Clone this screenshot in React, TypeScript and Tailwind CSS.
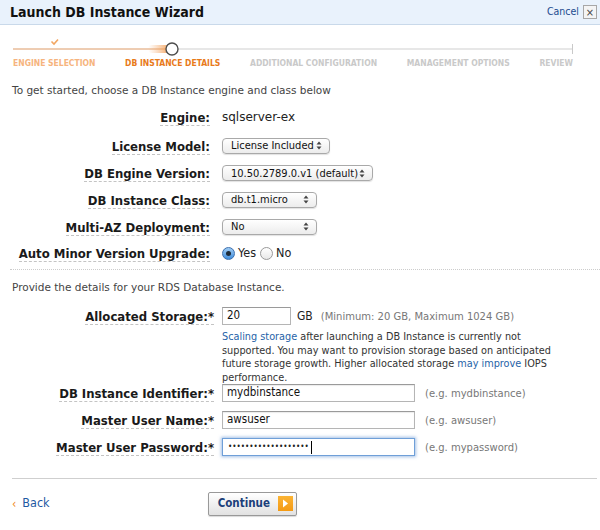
import React from "react";

const Arrows = () => (
  <svg width="6" height="9" viewBox="0 0 6 9" className="ml-auto shrink-0">
    <path d="M3 0.5 L5.5 3.5 H0.5 Z" fill="#444" />
    <path d="M3 8.5 L5.5 5.5 H0.5 Z" fill="#444" />
  </svg>
);

const Select = ({ w, text }: { w: string; text: string }) => (
  <div
    className={`${w} h-[16px] flex items-center pl-[8px] pr-[7px] rounded-[4px] border border-[#a9a9a9] bg-gradient-to-b from-white to-[#ececec] shadow-[0_1px_1px_rgba(0,0,0,0.12)] text-[11px] text-[#111] leading-none`}
  >
    <span className="whitespace-nowrap">{text}</span>
    <Arrows />
  </div>
);

const Label = ({ children }: { children: React.ReactNode }) => (
  <span className="inline-block font-bold text-[13px] text-[#1a1a1a] leading-[15px] border-b border-dashed border-[#c4c4c4]">
    {children}
  </span>
);

const Row = ({ h, label, children }: { h: string; label: string; children: React.ReactNode }) => (
  <div className={`flex items-center ${h}`}>
    <div className="w-[210px] text-right whitespace-nowrap">
      <Label>{label}</Label>
    </div>
    <div className="ml-[12px] flex items-center">{children}</div>
  </div>
);

const Input = ({ children, focus }: { children?: React.ReactNode; focus?: boolean }) => (
  <div
    className={`w-[193px] h-[18px] flex items-center pl-[4px] bg-white border text-[11.5px] text-[#111] ${
      focus
        ? "border-[#6f9fd8] shadow-[0_0_3px_1px_rgba(90,140,210,0.55)]"
        : "border-[#b5b5b5] border-t-[#9a9a9a] shadow-[inset_0_1px_1px_rgba(0,0,0,0.08)]"
    }`}
  >
    {children}
  </div>
);

const Row2 = ({ label, children, hint }: { label: string; children: React.ReactNode; hint?: string }) => (
  <div className="flex items-center h-[18px]">
    <div className="w-[214px] text-right whitespace-nowrap">
      <Label>{label}</Label>
    </div>
    <div className="ml-[8px] flex items-center">
      {children}
      {hint && (
        <span className="ml-[10px] font-['DejaVu_Sans',sans-serif] text-[10px] text-[#777] whitespace-nowrap">{hint}</span>
      )}
    </div>
  </div>
);

export default function App() {
  return (
    <div className="w-[600px] h-[530px] bg-white overflow-hidden font-['DejaVu_Sans_Condensed','DejaVu_Sans',sans-serif] text-[#333]">
      {/* Header */}
      <div className="h-[25px] bg-[#e9f2fc] border-b border-[#c9d9ea] flex items-center pl-[10px] pr-[3px]">
        <span className="font-bold text-[14px] text-[#111] leading-none">Launch DB Instance Wizard</span>
        <span className="ml-auto text-[10.5px] text-[#1d4b8f]">Cancel</span>
        <span className="ml-[4px] w-[14px] h-[14px] border border-[#a7a7a7] bg-[#f4f4f4] flex items-center justify-center text-[11px] leading-none text-[#444]">
          ×
        </span>
      </div>

      {/* Progress */}
      <div className="mt-[13px]">
        <svg width="600" height="20" viewBox="0 0 600 20" className="block">
          <defs>
            <linearGradient id="glow" x1="0" x2="1" y1="0" y2="0">
              <stop offset="0" stopColor="#f7b27a" stopOpacity="0" />
              <stop offset="1" stopColor="#f39a4c" stopOpacity="0.9" />
            </linearGradient>
          </defs>
          <line x1="13" y1="11" x2="572" y2="11" stroke="#cfcfcf" strokeWidth="1" />
          <line x1="13" y1="11" x2="168" y2="11" stroke="#f5b27e" strokeWidth="1" />
          <rect x="148" y="7" width="22" height="8" rx="4" fill="url(#glow)" />
          <line x1="572.5" y1="6" x2="572.5" y2="16" stroke="#c9c9c9" strokeWidth="1" />
          <path d="M51.5 3.5 L54 6 L58 1.5" fill="none" stroke="#f2a763" strokeWidth="1.6" />
          <circle cx="172" cy="11" r="6" fill="white" stroke="#4d4d4d" strokeWidth="1.4" />
        </svg>
        <div className="flex justify-between pl-[13px] pr-[27px] h-[11px] items-center font-bold text-[8.5px] leading-none whitespace-nowrap">
          <span className="text-[#f6b47e]">ENGINE SELECTION</span>
          <span className="text-[#e87a1a]">DB INSTANCE DETAILS</span>
          <span className="text-[#c9c9c9]">ADDITIONAL CONFIGURATION</span>
          <span className="text-[#c9c9c9]">MANAGEMENT OPTIONS</span>
          <span className="text-[#c9c9c9]">REVIEW</span>
        </div>
      </div>

      <div className="mt-[14px] pl-[12px] font-['DejaVu_Sans',sans-serif] text-[10.5px] leading-[14px] text-[#444]">
        To get started, choose a DB Instance engine and class below
      </div>

      <div className="mt-[6px]">
        <Row h="h-[28px]" label="Engine:">
          <span className="font-['DejaVu_Sans',sans-serif] text-[12px] text-[#222]">sqlserver-ex</span>
        </Row>
        <Row h="h-[29px]" label="License Model:">
          <Select w="w-[108px]" text="License Included" />
        </Row>
        <Row h="h-[26px]" label="DB Engine Version:">
          <Select w="w-[151px]" text="10.50.2789.0.v1 (default)" />
        </Row>
        <Row h="h-[27px]" label="DB Instance Class:">
          <Select w="w-[95px]" text="db.t1.micro" />
        </Row>
        <Row h="h-[27px]" label="Multi-AZ Deployment:">
          <Select w="w-[95px]" text="No" />
        </Row>
        <Row h="h-[26px]" label="Auto Minor Version Upgrade:">
          <span className="w-[13px] h-[13px] rounded-full border border-[#3d6fae] bg-gradient-to-b from-[#9fcdf5] to-[#3f8ddb] flex items-center justify-center">
            <span className="w-[5px] h-[5px] rounded-full bg-[#1d2b3a]" />
          </span>
          <span className="ml-[3px] text-[12.5px] text-[#222]">Yes</span>
          <span className="ml-[4px] w-[13px] h-[13px] rounded-full border border-[#9a9a9a] bg-gradient-to-b from-white to-[#e8e8e8]" />
          <span className="ml-[3px] text-[12.5px] text-[#222]">No</span>
        </Row>
      </div>

      <div className="mt-[3px] ml-[10px] border-t border-dotted border-[#cccccc]" />

      <div className="mt-[10px] pl-[12px] font-['DejaVu_Sans',sans-serif] text-[10.5px] leading-[14px] text-[#444]">
        Provide the details for your RDS Database Instance.
      </div>

      <div className="mt-[13px]">
        <Row2 label="Allocated Storage:*">
          <div className="w-[69px] h-[18px] flex items-center pl-[4px] bg-white border border-[#b5b5b5] border-t-[#9a9a9a] text-[11.5px] text-[#111]">
            20
          </div>
          <span className="ml-[6px] text-[12px] text-[#222]">GB</span>
          <span className="ml-[8px] font-['DejaVu_Sans',sans-serif] text-[10px] text-[#777] whitespace-nowrap">
            (Minimum: 20 GB, Maximum 1024 GB)
          </span>
        </Row2>
        <div className="mt-[5px] ml-[222px] text-[10.8px] leading-[13.5px] text-[#333] whitespace-nowrap">
          <span className="text-[#1f63a8]">Scaling storage</span> after launching a DB Instance is currently not
          <br />
          supported. You may want to provision storage based on anticipated
          <br />
          future storage growth. Higher allocated storage <span className="text-[#1f63a8]">may improve</span> IOPS
          <br />
          performance.
        </div>
        <div className="flex flex-col gap-[9px]">
          <Row2 label="DB Instance Identifier:*" hint="(e.g. mydbinstance)">
            <Input>mydbinstance</Input>
          </Row2>
          <Row2 label="Master User Name:*" hint="(e.g. awsuser)">
            <Input>awsuser</Input>
          </Row2>
          <Row2 label="Master User Password:*" hint="(e.g. mypassword)">
            <Input focus>
              <span className="ml-[1px] text-[8px] tracking-[0px] text-[#222] leading-none">•••••••••••••••••••</span>
              <span className="ml-[2px] w-[1px] h-[13px] bg-black" />
            </Input>
          </Row2>
        </div>
      </div>

      <div className="mt-[22px] ml-[12px] mr-[3px] border-t border-[#cfcfcf]" />

      <div className="mt-[13px] flex items-center h-[23px]">
        <span className="ml-[12px] text-[#f08a24] text-[12px] leading-none">‹</span>
        <span className="ml-[6px] text-[12.5px] text-[#1f5aa3]">Back</span>
        <div className="ml-[158px] w-[89px] h-[24px] flex items-center border border-[#999] rounded-[2px] bg-gradient-to-b from-white to-[#e2e2e2] shadow-[0_1px_1px_rgba(0,0,0,0.15)]">
          <span className="ml-[9px] font-bold text-[11.5px] text-[#1c3f7a]">Continue</span>
          <span className="ml-auto mr-[3px] w-[15px] h-[15px] bg-gradient-to-b from-[#fbb434] to-[#f49a12] flex items-center justify-center">
            <svg width="7" height="9" viewBox="0 0 7 9">
              <path d="M1 0.5 L6 4.5 L1 8.5 Z" fill="white" />
            </svg>
          </span>
        </div>
      </div>
    </div>
  );
}
